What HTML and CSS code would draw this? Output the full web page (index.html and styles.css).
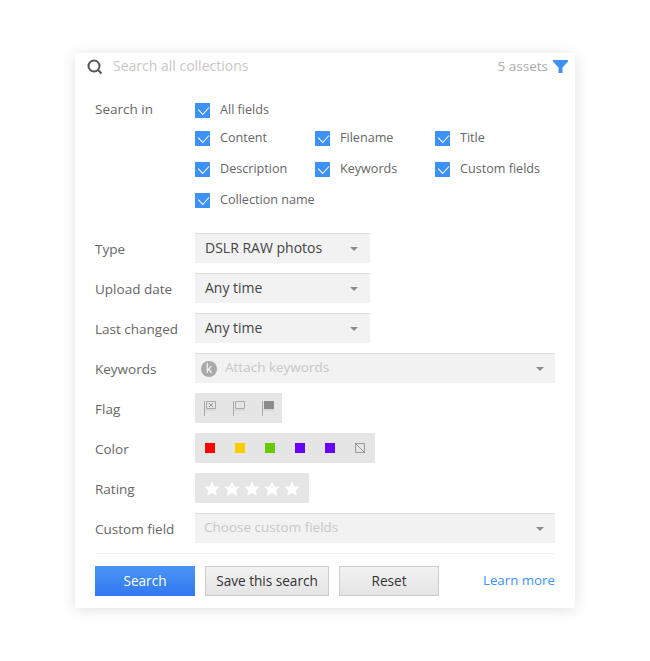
FILE: index.html
```html
<!DOCTYPE html>
<html lang="en">
<head>
  <meta charset="UTF-8" />
  <meta name="viewport" content="width=device-width, initial-scale=1.0"/>
  <title>Search all collections</title>
  <link rel="stylesheet" href="styles.css">
</head>
<body>
  <div class="panel">
    <div class="search-bar">
      <svg class="search-icon" width="16" height="16" viewBox="0 0 16 16"><circle cx="7" cy="7" r="5.5" fill="none" stroke="#555" stroke-width="2"/><path d="M11 11l3.5 3.5" stroke="#555" stroke-width="2" fill="none"/></svg>
      <span class="search-text">Search all collections</span>
      <span class="assets">5 assets</span>
      <svg class="funnel" width="15" height="14" viewBox="0 0 15 14"><path d="M0 0h15v1.500L9.500 7.500V13h-4V7.500L0 1.500z" fill="#3d91f7"/></svg>
    </div>

    <div class="search-in">
      <div class="label">Search in</div>
      <div class="checks">
        <label class="check all"><span class="box"><svg width="15" height="15" viewBox="0 0 15 15"><path d="M3.300 6.700l4.400 4.800 6.300-7" fill="none" stroke="#fff" stroke-width="1.100"/></svg></span>All fields</label>
        <label class="check"><span class="box"><svg width="15" height="15" viewBox="0 0 15 15"><path d="M3.300 6.700l4.400 4.800 6.300-7" fill="none" stroke="#fff" stroke-width="1.100"/></svg></span>Content</label>
        <label class="check"><span class="box"><svg width="15" height="15" viewBox="0 0 15 15"><path d="M3.300 6.700l4.400 4.800 6.300-7" fill="none" stroke="#fff" stroke-width="1.100"/></svg></span>Filename</label>
        <label class="check"><span class="box"><svg width="15" height="15" viewBox="0 0 15 15"><path d="M3.300 6.700l4.400 4.800 6.300-7" fill="none" stroke="#fff" stroke-width="1.100"/></svg></span>Title</label>
        <label class="check"><span class="box"><svg width="15" height="15" viewBox="0 0 15 15"><path d="M3.300 6.700l4.400 4.800 6.300-7" fill="none" stroke="#fff" stroke-width="1.100"/></svg></span>Description</label>
        <label class="check"><span class="box"><svg width="15" height="15" viewBox="0 0 15 15"><path d="M3.300 6.700l4.400 4.800 6.300-7" fill="none" stroke="#fff" stroke-width="1.100"/></svg></span>Keywords</label>
        <label class="check"><span class="box"><svg width="15" height="15" viewBox="0 0 15 15"><path d="M3.300 6.700l4.400 4.800 6.300-7" fill="none" stroke="#fff" stroke-width="1.100"/></svg></span>Custom fields</label>
        <label class="check all"><span class="box"><svg width="15" height="15" viewBox="0 0 15 15"><path d="M3.300 6.700l4.400 4.800 6.300-7" fill="none" stroke="#fff" stroke-width="1.100"/></svg></span>Collection name</label>
      </div>
    </div>

    <div class="fields">
      <div class="row">
        <div class="label">Type</div>
        <div class="select short"><span class="value">DSLR RAW photos</span><span class="caret"></span></div>
      </div>
      <div class="row">
        <div class="label">Upload date</div>
        <div class="select short"><span class="value">Any time</span><span class="caret"></span></div>
      </div>
      <div class="row">
        <div class="label">Last changed</div>
        <div class="select short"><span class="value">Any time</span><span class="caret"></span></div>
      </div>
      <div class="row">
        <div class="label">Keywords</div>
        <div class="select disabled">
          <span class="k-badge">k</span>
          <span class="placeholder">Attach keywords</span><span class="caret"></span>
        </div>
      </div>
      <div class="row">
        <div class="label">Flag</div>
        <div class="tool-box flags">
          <svg width="15" height="15" viewBox="0 0 15 15"><path d="M.5 0v15" stroke="#aaa"/><path d="M2.500.5h9v7h-9z" fill="none" stroke="#aaa"/><path d="M5 2l4 4M9 2L5 6" stroke="#999"/><path d="M1 9h11" stroke="#ccc"/></svg>
          <svg width="15" height="15" viewBox="0 0 15 15"><path d="M.5 0v15" stroke="#aaa"/><path d="M2.500.5h9v7h-9z" fill="none" stroke="#aaa"/><path d="M1 9h11" stroke="#ccc"/></svg>
          <svg width="15" height="15" viewBox="0 0 15 15"><path d="M.5 0v15" stroke="#aaa"/><path d="M2 0h10v8H2z" fill="#8c8c8c"/><path d="M1 9h11" stroke="#ccc"/></svg>
        </div>
      </div>
      <div class="row">
        <div class="label">Color</div>
        <div class="tool-box colors">
          <span class="swatch red"></span>
          <span class="swatch yellow"></span>
          <span class="swatch green"></span>
          <span class="swatch violet"></span>
          <span class="swatch violet"></span>
          <svg width="10" height="10" viewBox="0 0 10 10"><path d="M.5.5h9v9h-9zM.5.5l9 9" fill="none" stroke="#999"/></svg>
        </div>
      </div>
      <div class="row">
        <div class="label">Rating</div>
        <div class="tool-box stars">
          <svg width="16" height="15" viewBox="0 0 16 15"><path d="M8 0l2.300 5.200 5.700.5-4.300 3.700 1.300 5.600L8 12l-5 3 1.300-5.600L0 5.700l5.700-.5z" fill="#fff"/></svg>
          <svg width="16" height="15" viewBox="0 0 16 15"><path d="M8 0l2.300 5.200 5.700.5-4.300 3.700 1.300 5.600L8 12l-5 3 1.300-5.600L0 5.700l5.700-.5z" fill="#fff"/></svg>
          <svg width="16" height="15" viewBox="0 0 16 15"><path d="M8 0l2.300 5.200 5.700.5-4.300 3.700 1.300 5.600L8 12l-5 3 1.300-5.600L0 5.700l5.700-.5z" fill="#fff"/></svg>
          <svg width="16" height="15" viewBox="0 0 16 15"><path d="M8 0l2.300 5.200 5.700.5-4.300 3.700 1.300 5.600L8 12l-5 3 1.300-5.600L0 5.700l5.700-.5z" fill="#fff"/></svg>
          <svg width="16" height="15" viewBox="0 0 16 15"><path d="M8 0l2.300 5.200 5.700.5-4.300 3.700 1.300 5.600L8 12l-5 3 1.300-5.600L0 5.700l5.700-.5z" fill="#fff"/></svg>
        </div>
      </div>
      <div class="row">
        <div class="label">Custom field</div>
        <div class="select disabled">
          <span class="placeholder custom">Choose custom fields</span><span class="caret"></span>
        </div>
      </div>
    </div>

    <div class="actions">
      <button class="btn primary">Search</button>
      <button class="btn save">Save this search</button>
      <button class="btn reset">Reset</button>
      <a class="learn" href="#">Learn more</a>
    </div>
  </div>
</body>
</html>
```

FILE: styles.css
```css
body {
  box-sizing: border-box;
  min-height: 661px;
  margin: 0;
  padding: 53px 0 0 75px;
  background: #fff;
  font-family: 'Open Sans', sans-serif;
  font-size: 14px;
  color: #666;
}
.panel {
  width: 460px;
  padding: 0 20px 12px;
  background: #fff;
  box-shadow: 0 2px 14px rgba(0,0,0,0.12);
}
.search-bar {
  display: flex;
  align-items: center;
  height: 25px;
  margin: 0 -13px 0 -8px;
}
.search-icon {
  margin: 2px 10px 0 0;
}
.search-text {
  flex: 1;
  color: #c8c8c8;
}
.assets {
  margin-right: 5px;
  color: #aaa;
  font-size: 13.5px;
}
.funnel {
  margin-top: 2px;
}
.search-in {
  display: flex;
  margin-top: 25px;
}
.label {
  width: 100px;
  flex-shrink: 0;
  font-size: 13.5px;
}
.search-in .label {
  line-height: 13px;
}
.row .label {
  padding-top: 2px;
}
.checks {
  display: flex;
  flex-wrap: wrap;
  width: 360px;
}
.check {
  display: flex;
  align-items: flex-start;
  width: 120px;
  height: 15px;
  margin-bottom: 16px;
  font-size: 12.6px;
  line-height: 13px;
}
.check.all {
  width: 360px;
}
.check:first-child {
  margin-bottom: 13px;
}
.box {
  display: block;
  width: 15px;
  height: 15px;
  margin-right: 10px;
  background: #3d91f7;
}
.box svg {
  display: block;
}
.fields {
  display: flex;
  flex-direction: column;
  gap: 10px;
  margin-top: 9px;
}
.row {
  display: flex;
  align-items: center;
  height: 30px;
}
.select {
  display: flex;
  align-items: center;
  flex: 1;
  height: 27px;
  padding: 0 10px 2px;
  background: #f2f2f2;
  border-top: 1px solid #dedede;
  color: #444;
}
.select.short {
  flex: none;
  width: 155px;
}
.select.short .caret {
  margin-right: 2px;
}
.value {
  flex: 1;
}
.placeholder {
  flex: 1;
  padding-bottom: 2px;
  color: #c8c8c8;
  font-size: 13.5px;
}
.placeholder.custom {
  margin-left: -1px;
}
.caret {
  width: 0;
  height: 0;
  margin: 2px 1px 0 0;
  border-left: 4.5px solid transparent;
  border-right: 4.5px solid transparent;
  border-top: 4px solid #8c8c8c;
}
.k-badge {
  width: 16px;
  height: 16px;
  margin: 2px 8px 0 -4px;
  border-radius: 50%;
  background: #aaa;
  color: #fff;
  font-size: 12px;
  line-height: 15px;
  text-align: center;
}
.tool-box {
  display: flex;
  align-items: center;
  height: 30px;
  background: #e5e5e5;
}
.flags {
  width: 78px;
  padding-left: 9px;
  gap: 14px;
}
.flags svg {
  margin-top: 1px;
}
.colors {
  width: 170px;
  padding-left: 10px;
  gap: 20px;
}
.stars {
  width: 105px;
  padding-left: 9px;
  gap: 4px;
}
.swatch {
  width: 10px;
  height: 10px;
  margin-top: -1px;
}
.colors svg {
  margin-top: -1px;
}
.red { background: #ff0000; }
.yellow { background: #ffcc00; }
.green { background: #66cc00; }
.violet { background: #6600ff; }
.actions {
  display: flex;
  align-items: center;
  gap: 10px;
  margin-top: 10px;
  padding-top: 12px;
  border-top: 1px solid #eee;
}
.btn {
  height: 30px;
  padding: 0 0 2px;
  border: 1px solid #ccc;
  background: linear-gradient(#f2f2f2, #e4e4e4);
  color: #333;
  font-family: inherit;
  font-size: 13.6px;
}
.btn.primary {
  width: 100px;
  border: none;
  background: linear-gradient(#4a94f5, #3278f0);
  color: #fff;
}
.btn.save {
  width: 124px;
}
.btn.reset {
  width: 100px;
}
.learn {
  margin: -2px 0 0 auto;
  color: #3d91f7;
  font-size: 13.3px;
  text-decoration: none;
}
```
